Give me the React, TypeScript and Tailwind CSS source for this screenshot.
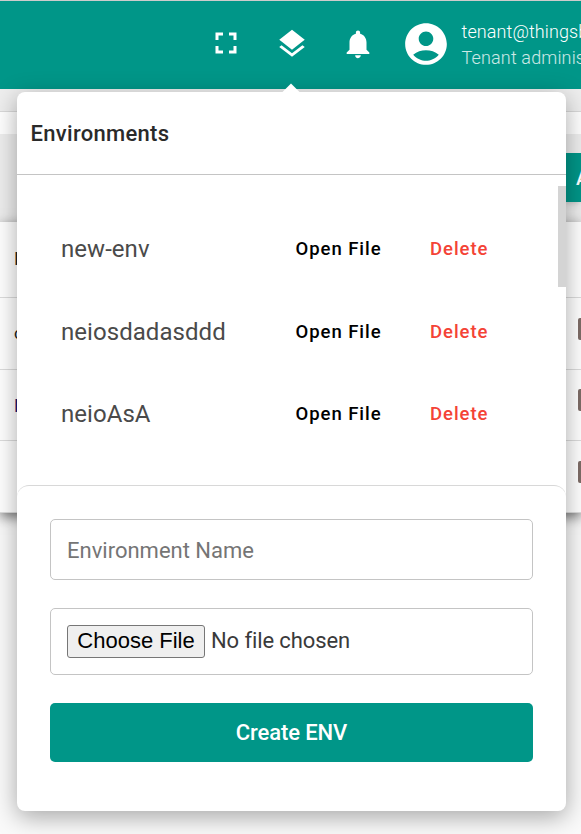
import React from "react";
import { MdAccountCircle, MdFullscreen, MdLayers, MdNotifications } from "react-icons/md";

const environments = ["new-env", "neiosdadasddd", "neioAsA"];

function Header() {
  return (
    <header className="flex h-[89px] border-t border-[#ccc] bg-[#009688] text-white">
      <div className="flex w-full shrink-0 items-start whitespace-nowrap">
        <MdFullscreen className="mt-[24px] ml-[208px] size-9 shrink-0" />
        <MdLayers className="mt-[26px] ml-[31px] size-[34px] shrink-0" />
        <MdNotifications className="mt-[26px] ml-[32px] size-[34px] shrink-0" />
        <MdAccountCircle className="mt-[18px] ml-[26px] size-[50px] shrink-0" />
        <div className="mt-[18px] ml-[10.5px] text-[18px] leading-[26px]">
          <p className="font-[350] tracking-[0.1px]">tenant@thingsboard.org</p>
          <p className="font-light tracking-[0.15px] text-white/80">Tenant administrator</p>
        </div>
      </div>
    </header>
  );
}

function TableRow({ label, height, text, marker }: { label: string; height: string; text: string; marker: boolean }) {
  return (
    <div className={`flex shrink-0 items-center justify-between border-b border-[#dcdcdc] pl-[14px] ${height} ${text}`}>
      <span>{label}</span>
      {marker && <span className="mb-[10px] h-[22px] w-[3px] rounded-l-[2px] bg-[#7d6c66]" />}
    </div>
  );
}

function Background() {
  return (
    <main>
      <div className="h-[23px] border-b border-[#d9d9d9] bg-[#eee]" />
      <div className="h-[22px] bg-white" />
      <div className="flex h-[88px] justify-end bg-[#eee] pt-[19px]">
        <div className="h-[49px] w-[18px] overflow-hidden bg-[#009688] pl-[13px] text-[20px] leading-[50px] font-medium text-white shadow-md">
          A
        </div>
      </div>
      <div className="flex h-[291px] flex-col bg-white shadow-[0_4px_12px_rgba(0,0,0,0.55)]">
        <TableRow label="N" height="h-[76px]" text="text-[19px] text-[#222]" marker={false} />
        <TableRow label="c" height="h-[72px]" text="text-[17px] text-[#222]" marker />
        <TableRow label="N" height="h-[71px]" text="text-[18px] text-[#1a1a70]" marker />
        <TableRow label="" height="h-[72px]" text="text-[17px] text-[#222]" marker />
      </div>
    </main>
  );
}

function EnvironmentRow({ name }: { name: string }) {
  return (
    <li className="flex h-[82.4px] items-center pl-11">
      <span className="w-[234.5px] text-[24px] tracking-[0.05px] text-[#4a4a4a]">{name}</span>
      <button className="w-[134.5px] pt-[2px] text-left text-[18.5px] font-medium tracking-[0.95px] text-black">Open File</button>
      <button className="pt-[2px] text-[18.5px] font-medium tracking-[0.95px] text-[#f44336]">Delete</button>
    </li>
  );
}

function EnvironmentPanel() {
  return (
    <section className="absolute top-[92px] left-[17px] h-[719px] w-[549px] rounded-lg bg-white shadow-[0_6px_24px_rgba(0,0,0,0.34)]">
      <div className="absolute top-[-6px] left-[268px] size-3 rotate-45 bg-white" />
      <h2 className="relative flex h-[83px] items-center border-b border-[#c4c4c4] pl-[13.5px] text-[22px] font-medium tracking-[0.3px] text-[#2a2a2a]">
        Environments
      </h2>
      <div className="flex h-[310px] justify-between">
        <ul className="pt-[33px]">
          {environments.map((name) => (
            <EnvironmentRow key={name} name={name} />
          ))}
        </ul>
        <div className="mt-[11px] h-[101px] w-2 bg-[#d4d4d4]" />
      </div>
      <form className="rounded-t-xl border-t border-[#d8d8d8] px-[33px] pt-[33px]">
        <div className="flex h-[61px] items-center rounded-[5px] border border-[#c4c4c4] px-4 pt-[2px] text-[22px] text-[#757575]">
          Environment Name
        </div>
        <div className="mt-7 flex h-[67px] items-center rounded-[5px] border border-[#c4c4c4] px-4 text-[22px] text-[#3a3a3a]">
          <button type="button" className="flex h-[33px] w-[138px] items-center justify-center rounded-[3px] border border-[#767676] bg-[#efefef] pb-[2px] font-['Liberation_Sans',sans-serif] text-[22px] text-black">
            Choose File
          </button>
          <span className="mb-[2px] ml-[6px] tracking-[-0.1px]">No file chosen</span>
        </div>
        <button type="button" className="mt-7 flex h-[59px] w-full items-center justify-center rounded-[5px] bg-[#009688] text-[22px] font-medium tracking-[-0.1px] text-white">
          Create ENV
        </button>
      </form>
    </section>
  );
}

export default function App() {
  return (
    <div className="relative h-[834px] w-[581px] overflow-hidden bg-[#fafafa] font-[Roboto,sans-serif]">
      <Header />
      <Background />
      <EnvironmentPanel />
    </div>
  );
}
